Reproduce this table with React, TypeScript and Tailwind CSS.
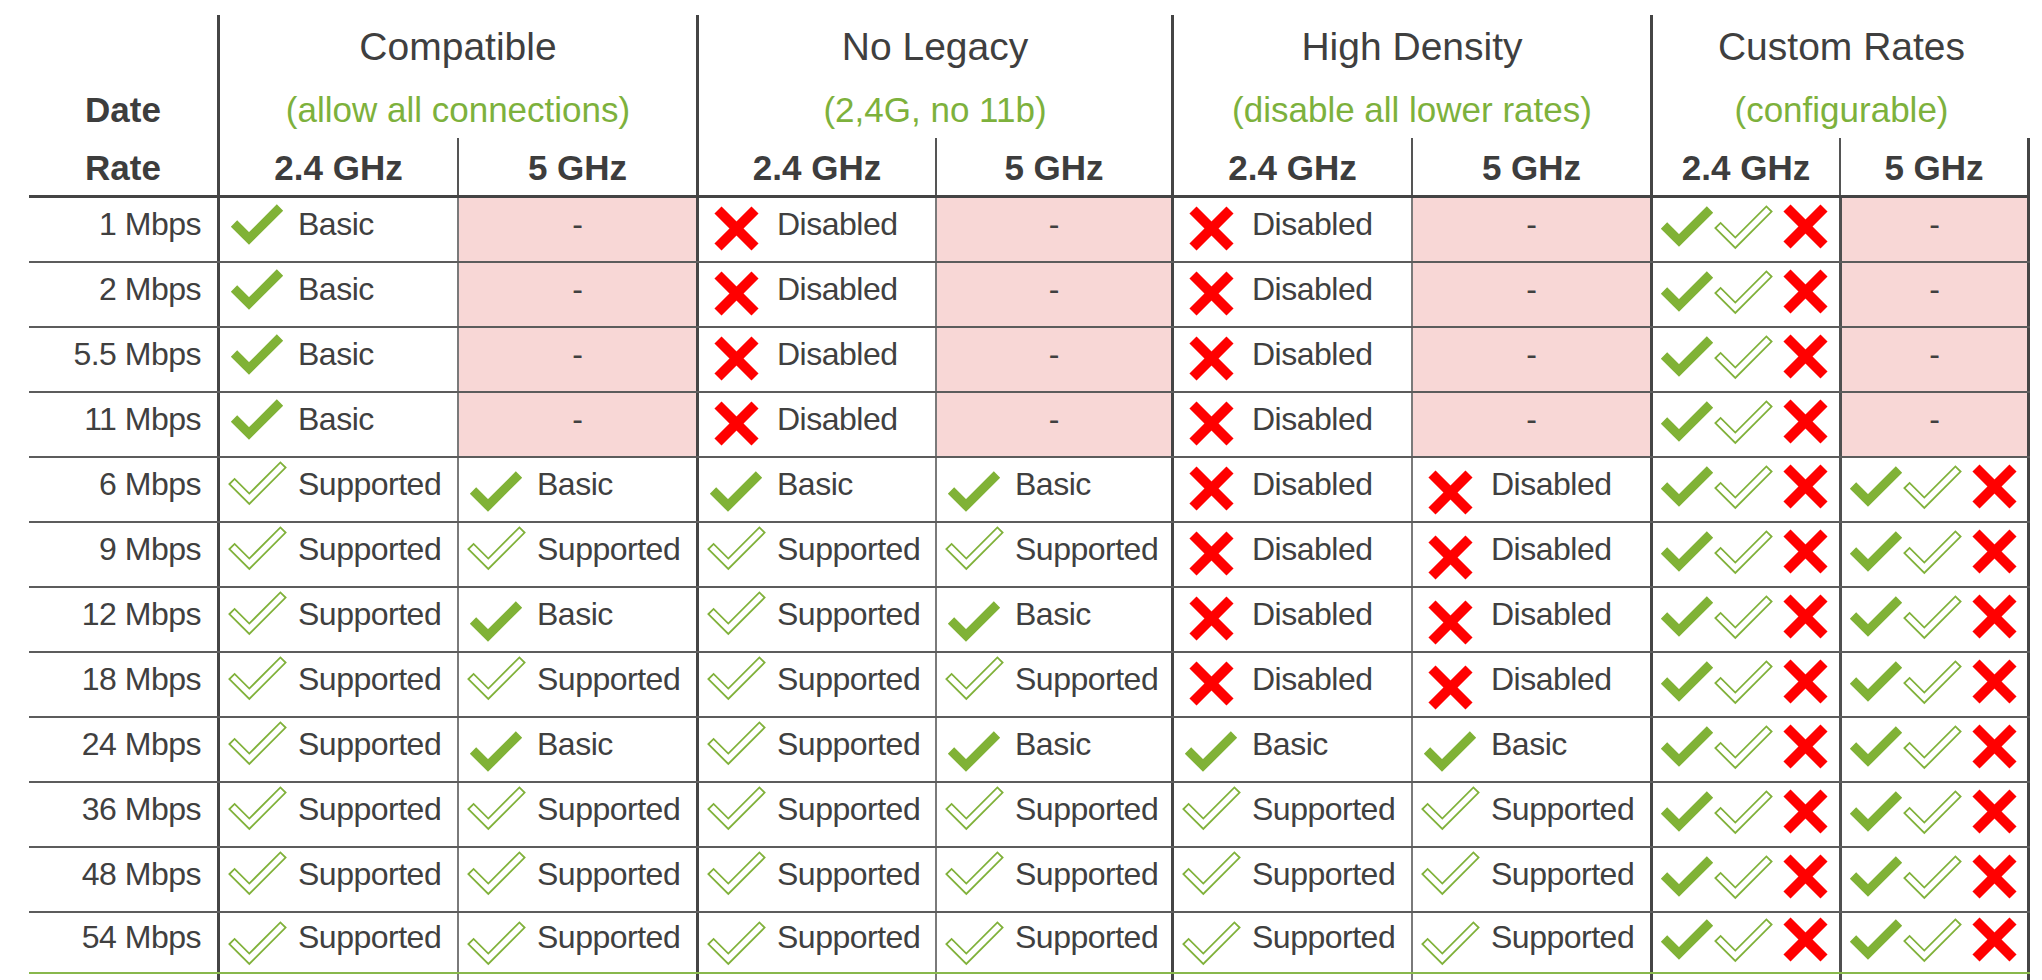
import React from "react";

type Kind = "basic" | "sup" | "dis" | "none" | "custom";

const COLS =
  "grid grid-cols-[188px_240px_239px_239px_236px_240px_239px_189px_191px]";

const bodyBorders = [
  "",
  "border-l-[3px] border-l-[#454545]",
  "border-l-2 border-l-[#7a7a7a]",
  "border-l-[3px] border-l-[#454545]",
  "border-l-2 border-l-[#7a7a7a]",
  "border-l-[3px] border-l-[#454545]",
  "border-l-2 border-l-[#7a7a7a]",
  "border-l-[3px] border-l-[#454545]",
  "border-l-[3px] border-l-[#505050] border-r-[3px] border-r-[#454545]",
];

const headBorders = [
  "border-l-[3px] border-l-[#454545]",
  "border-l-2 border-l-[#555555]",
  "border-l-[3px] border-l-[#454545]",
  "border-l-2 border-l-[#555555]",
  "border-l-[3px] border-l-[#454545]",
  "border-l-2 border-l-[#555555]",
  "border-l-[3px] border-l-[#454545]",
  "border-l-2 border-l-[#555555] border-r-[3px] border-r-[#454545]",
];

const FilledCheck = () => (
  <svg width="54" height="41" viewBox="0 0 54 41" className="block shrink-0">
    <polyline
      points="4,19.5 19,34.5 50,3.5"
      fill="none"
      stroke="#80b236"
      strokeWidth="9"
      strokeLinejoin="miter"
      strokeMiterlimit={10}
    />
  </svg>
);

const OutlineCheck = () => (
  <svg width="59" height="46" viewBox="-1 -1 59 46" className="block shrink-0">
    <polygon
      points="0.4,23.1 20.3,43 56.6,6.6 51.4,1.4 20.3,32.6 5.6,17.9"
      fill="#ffffff"
      stroke="#80b13a"
      strokeWidth="1.8"
      strokeLinejoin="miter"
    />
  </svg>
);

const XIcon = () => (
  <svg width="45" height="45" viewBox="0 0 45 45" className="block shrink-0">
    <line x1="4" y1="4" x2="41" y2="41" stroke="#ff0000" strokeWidth="10" />
    <line x1="41" y1="4" x2="4" y2="41" stroke="#ff0000" strokeWidth="10" />
  </svg>
);

const rates = [
  "1 Mbps",
  "2 Mbps",
  "5.5 Mbps",
  "11 Mbps",
  "6 Mbps",
  "9 Mbps",
  "12 Mbps",
  "18 Mbps",
  "24 Mbps",
  "36 Mbps",
  "48 Mbps",
  "54 Mbps",
];

const legacy: Kind[] = ["basic", "none", "dis", "none", "dis", "none", "custom", "none"];
const allSup: Kind[] = ["sup", "sup", "sup", "sup", "sup", "sup", "custom", "custom"];

const data: Kind[][] = [
  legacy,
  legacy,
  legacy,
  legacy,
  ["sup", "basic", "basic", "basic", "dis", "dis", "custom", "custom"],
  ["sup", "sup", "sup", "sup", "dis", "dis", "custom", "custom"],
  ["sup", "basic", "sup", "basic", "dis", "dis", "custom", "custom"],
  ["sup", "sup", "sup", "sup", "dis", "dis", "custom", "custom"],
  ["sup", "basic", "sup", "basic", "basic", "basic", "custom", "custom"],
  allSup,
  allSup,
  allSup,
];

function shiftCls(kind: Kind, row: number, col: number): string {
  if (kind === "basic") return row < 4 ? "mb-[11px]" : "mt-[4px]";
  if (kind === "sup") return row === 11 ? "" : "mb-[13px]";
  if (kind === "dis") return col === 5 ? "mt-[5px]" : "mb-[3px]";
  return "mb-[6px]";
}

const textCls =
  "ml-[12px] pb-[12px] text-[32px] tracking-[-0.5px] leading-[36px] text-[#404040] whitespace-nowrap";

function BodyCell({ kind, row, col }: { kind: Kind; row: number; col: number }) {
  const border = bodyBorders[col + 1];
  if (kind === "none") {
    return (
      <div className={`${border} bg-[#f8d7d6] flex items-center justify-center`}>
        <span className="pb-[12px] text-[32px] leading-[36px] text-[#404040]">-</span>
      </div>
    );
  }
  if (kind === "custom") {
    return (
      <div className={`${border} flex items-center pl-[7px]`}>
        <div className={`flex items-center ${shiftCls(kind, row, col)}`}>
          <FilledCheck />
          <OutlineCheck />
          <div className="ml-[10px]">
            <XIcon />
          </div>
        </div>
      </div>
    );
  }
  const label = kind === "basic" ? "Basic" : kind === "sup" ? "Supported" : "Disabled";
  return (
    <div className={`${border} flex items-center pl-[8px]`}>
      <div className={`w-[58px] flex justify-center ${shiftCls(kind, row, col)}`}>
        {kind === "basic" ? <FilledCheck /> : kind === "sup" ? <OutlineCheck /> : <XIcon />}
      </div>
      <span className={textCls}>{label}</span>
    </div>
  );
}

const groups = [
  { title: "Compatible", sub: "(allow all connections)" },
  { title: "No Legacy", sub: "(2,4G, no 11b)" },
  { title: "High Density", sub: "(disable all lower rates)" },
  { title: "Custom Rates", sub: "(configurable)" },
];

export default function App() {
  return (
    <div className="w-[2042px] h-[980px] overflow-hidden bg-white font-['Liberation_Sans',Arial,sans-serif] text-[#404040]">
      <div className="ml-[29px] w-[2001px]">
        {/* Header */}
        <div className={`${COLS} grid-rows-[123px_57px] h-[198px] pt-[15px] border-b-[3px] border-b-[#444444]`}>
          <div className="row-span-2 flex flex-col items-center">
            <div className="pt-[75px] text-[35px] leading-[40px] font-bold text-[#3d3d3d]">Date</div>
            <div className="mt-[18px] text-[35px] leading-[40px] font-bold text-[#3d3d3d]">Rate</div>
          </div>
          {groups.map((g) => (
            <div
              key={g.title}
              className="col-span-2 border-l-[3px] border-l-[#454545] flex flex-col items-center"
            >
              <div className="pt-[9px] text-[39px] leading-[45px] text-[#3f3f3f] whitespace-nowrap">
                {g.title}
              </div>
              <div className="mt-[21px] text-[35px] leading-[40px] text-[#7db13c] whitespace-nowrap">
                {g.sub}
              </div>
            </div>
          ))}
          {headBorders.map((b, i) => (
            <div key={i} className={`${b} flex items-center justify-center pt-[3px]`}>
              <span className="text-[35px] leading-[40px] font-bold text-[#3d3d3d]">
                {i % 2 === 0 ? "2.4 GHz" : "5 GHz"}
              </span>
            </div>
          ))}
        </div>

        {/* Body */}
        {data.map((kinds, r) => (
          <div
            key={r}
            className={
              r === 11
                ? `${COLS} h-[61px] border-b-2 border-b-[#88b84c]`
                : `${COLS} h-[65px] border-b-2 border-b-[#5c5c5c]`
            }
          >
            <div className="flex items-center justify-end pr-[16px]">
              <span className="pb-[12px] text-[32px] tracking-[-0.5px] leading-[36px] text-[#404040] whitespace-nowrap">
                {rates[r]}
              </span>
            </div>
            {kinds.map((k, c) => (
              <BodyCell key={c} kind={k} row={r} col={c} />
            ))}
          </div>
        ))}

        {/* Tail of vertical lines */}
        <div className={`${COLS} h-[6px]`}>
          {bodyBorders.map((b, i) => (
            <div key={i} className={b} />
          ))}
        </div>
      </div>
    </div>
  );
}
